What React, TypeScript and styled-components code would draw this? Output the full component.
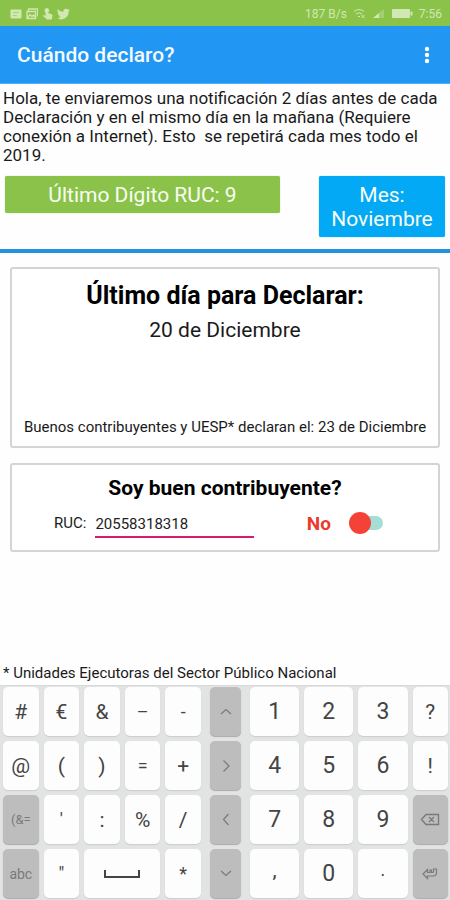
import React, { useState } from "react";
import styled, { createGlobalStyle } from "styled-components";

const GlobalStyle = createGlobalStyle`
  *, *::before, *::after { box-sizing: border-box; }
  body { margin: 0; background: #fefefe; color: #1a1a1a; font-family: Roboto, "Liberation Sans", sans-serif; }
  button, input { font-family: inherit; }
  h1, h2, p { margin: 0; }
`;

const Screen = styled.div`
  display: flex;
  flex-direction: column;
  min-height: 100vh;
`;

const StatusBar = styled.div`
  display: flex;
  justify-content: space-between;
  align-items: center;
  height: 26px;
  padding: 1px 8px 0 10px;
  background: #8bc34a;
  color: #d2e8b2;
  font-size: 12px;
`;

const StatusGroup = styled.div<{ $gap: number }>`
  display: flex;
  align-items: center;
  gap: ${(p) => p.$gap}px;
  svg { display: block; }
`;

const AppBar = styled.header`
  display: flex;
  justify-content: space-between;
  align-items: center;
  height: 58px;
  padding: 0 12px 0 17px;
  background: #2196f3;
  color: #f4faff;
  border-bottom: 1px solid #58aff5;
`;

const AppTitle = styled.h1`
  font-size: 21px;
  line-height: 26px;
  font-weight: 500;
`;

const MenuButton = styled.button`
  display: flex;
  padding: 4px 8px;
  border: 0;
  background: none;
  color: #fff;
`;

const Main = styled.main`
  display: flex;
  flex-direction: column;
  flex: 1;
`;

const Intro = styled.p`
  padding: 5px 3px 8px;
  font-size: 17px;
  line-height: 19px;
  white-space: pre-wrap;
`;

const Summary = styled.div`
  display: grid;
  grid-template-columns: 275fr 126fr;
  align-items: start;
  gap: 39px;
  padding: 3px 5px 12px;
  border-bottom: 4px solid #2490e0;
`;

const Tile = styled.div<{ $color: string }>`
  padding: 7px 8px 6px;
  border-radius: 2px;
  background: ${(p) => p.$color};
  box-shadow: 0 0 1px ${(p) => p.$color};
  color: #f8fdf4;
  font-size: 21px;
  line-height: 24px;
  text-align: center;
`;

const Cards = styled.div`
  display: flex;
  flex-direction: column;
  gap: 15px;
  padding: 14px 10px 0;
`;

const Card = styled.section`
  display: flex;
  flex-direction: column;
  align-items: center;
  border: 2px solid #d4d4d4;
  border-radius: 3px;
  background: #fff;
`;

const DeadlineCard = styled(Card)`
  min-height: 181px;
  padding: 12px 8px 9px;
`;

const TaxpayerCard = styled(Card)`
  gap: 5px;
  padding: 8px 40px 12px;
`;

const CardTitle = styled.h2<{ $size: number }>`
  font-size: ${(p) => p.$size}px;
  line-height: 30px;
  font-weight: 700;
  color: #000;
`;

const Deadline = styled.p`
  padding-top: 4px;
  font-size: 21px;
  line-height: 30px;
`;

const Note = styled.p`
  margin-top: auto;
  font-size: 15px;
  line-height: 20px;
`;

const FormRow = styled.div`
  display: flex;
  align-items: center;
  justify-content: space-between;
  width: 100%;
  padding: 0 15px 0 2px;
`;

const Field = styled.div`
  display: flex;
  align-items: center;
  gap: 9px;
`;

const FieldLabel = styled.label`
  font-size: 15px;
  line-height: 20px;
`;

const RucInput = styled.input`
  width: 159px;
  height: 30px;
  padding: 4px 0 0;
  border: 0;
  border-bottom: 2px solid #d81b72;
  outline: 0;
  background: none;
  color: #222;
  font-size: 15px;
`;

const SwitchLabel = styled.label`
  display: flex;
  align-items: center;
  gap: 18px;
  color: #ea3a2b;
  font-size: 19px;
  font-weight: 700;
`;

const Switch = styled.input`
  appearance: none;
  position: relative;
  width: 34px;
  height: 22px;
  margin: 0;
  &::before {
    content: "";
    position: absolute;
    inset: 4px 0 4px 6px;
    border-radius: 7px;
    background: #a4ded6;
  }
  &::after {
    content: "";
    position: absolute;
    top: 0;
    left: 0;
    width: 22px;
    height: 22px;
    border-radius: 50%;
    background: #f44336;
  }
  &:checked::after { left: 12px; background: #009688; }
`;

const Footnote = styled.p`
  margin-top: auto;
  padding: 12px 3px 2px;
  font-size: 15px;
  line-height: 20px;
`;

const Keyboard = styled.div`
  display: grid;
  grid-template-columns: 198fr 31fr 198fr;
  gap: 9px;
  padding: 1px 2px 2px 3px;
  border-top: 1px solid #d9d9d9;
  background: #e2e3e3;
`;

const KeyBlock = styled.div<{ $columns: string }>`
  display: grid;
  grid-template-columns: ${(p) => p.$columns};
  grid-auto-rows: 49px;
  gap: 5px;
`;

const Key = styled.button<{ $dark?: boolean; $size?: number; $span?: number; $raised?: boolean }>`
  display: flex;
  align-items: center;
  justify-content: center;
  min-width: 0;
  grid-column: span ${(p) => p.$span ?? 1};
  padding: ${(p) => (p.$raised ? "0 0 8px" : "0")};
  border: 0;
  border-radius: 5px;
  background: ${(p) => (p.$dark ? "#bdbdbd" : "#fdfdfd")};
  box-shadow: 0 1px 1px ${(p) => (p.$dark ? "#a9a9a9" : "#cdcdcd")};
  color: ${(p) => (p.$dark ? "#7a7a7a" : "#444")};
  font-size: ${(p) => p.$size ?? 21}px;
`;

type KeyDef = { label: string; glyph?: React.ReactNode; dark?: boolean; size?: number; span?: number; raised?: boolean };

const Stroke = ({ d, w = 16, h = 16, width = 1.2 }: { d: string; w?: number; h?: number; width?: number }) => (
  <svg width={w} height={h} viewBox={`0 0 ${w} ${h}`} fill="none" stroke="currentColor" strokeWidth={width} aria-hidden="true">
    <path d={d} />
  </svg>
);

const symbolKeys: KeyDef[] = [
  { label: "#" }, { label: "€" }, { label: "&" }, { label: "–", size: 18 }, { label: "-", size: 18 },
  { label: "@" }, { label: "(" }, { label: ")" }, { label: "=", size: 18 }, { label: "+" },
  { label: "(&=", dark: true, size: 13 }, { label: "'", size: 18 }, { label: ":" }, { label: "%" }, { label: "/" },
  { label: "abc", dark: true, size: 14 }, { label: "\"", size: 18 },
  { label: "Espacio", span: 2, glyph: <Stroke w={36} h={12} width={2} d="M1 2v7h34V2" /> },
  { label: "*", size: 18 },
];

const navKeys: KeyDef[] = [
  { label: "Arriba", dark: true, glyph: <Stroke d="M3 10 8 5.500l5 4.500" /> },
  { label: "Derecha", dark: true, glyph: <Stroke d="M5.500 2.500 11 8l-5.500 5.500" /> },
  { label: "Izquierda", dark: true, glyph: <Stroke d="M10.500 2 5.500 7.500l5 5.500" /> },
  { label: "Abajo", dark: true, glyph: <Stroke d="M3 5 8 9.500l5-4.500" /> },
];

const numberKeys: KeyDef[] = [
  { label: "1", size: 23 }, { label: "2", size: 23 }, { label: "3", size: 23 }, { label: "?" },
  { label: "4", size: 23 }, { label: "5", size: 23 }, { label: "6", size: 23 }, { label: "!" },
  { label: "7", size: 23 }, { label: "8", size: 23 }, { label: "9", size: 23 },
  { label: "Borrar", dark: true, glyph: <Stroke w={20} h={14} width={1.4} d="M6 1.500h12.500v10H6L1.500 6.500zM9 4l5 5M14 4 9 9" /> },
  { label: ",", size: 21, raised: true }, { label: "0", size: 23 }, { label: ".", size: 18, raised: true },
  { label: "Intro", dark: true, glyph: <Stroke w={18} h={14} width={1.2} d="M6.500 2.500 2 7l4.500 4.500V9H12q3.500 0 3.500-3.500V2h-3v2.500q0 1-1 1h-1V3H9v2.500H6.500z" /> },
];

const Keys = ({ keys, columns }: { keys: KeyDef[]; columns: string }) => (
  <KeyBlock $columns={columns}>
    {keys.map((k) => (
      <Key
        key={k.label}
        type="button"
        aria-label={k.glyph ? k.label : undefined}
        $dark={k.dark}
        $size={k.size}
        $span={k.span}
        $raised={k.raised}
      >
        {k.glyph ?? k.label}
      </Key>
    ))}
  </KeyBlock>
);

const StatusIcons = () => (
  <StatusGroup $gap={4}>
    <svg width="12" height="10" viewBox="0 0 12 10" aria-hidden="true">
      <rect x="0.500" y="0.500" width="11" height="9" rx="1" fill="currentColor" />
      <path d="M3 3.500h6M3 6.500h4" stroke="#a9d276" />
    </svg>
    <svg width="12" height="12" viewBox="0 0 12 12" fill="none" stroke="currentColor" strokeWidth="1.300" aria-hidden="true">
      <path d="M2.500 3V1h9v7.500M1 3.500h8.500v7H1zM1.500 9.500 4 6.500l2 2 1.500-1.500 2 2.500" />
    </svg>
    <svg width="11" height="12" viewBox="0 0 11 12" fill="currentColor" aria-hidden="true">
      <path d="M3.500 1.500a1.300 1.300 0 0 1 2.600 0V5l3.500 1.200q1 .4.800 1.400L9.800 11.500H5L.8 7.800l.9-.9 1.800 1z" />
      <circle cx="4.800" cy="2.500" r="2.300" />
    </svg>
    <svg width="13" height="12" viewBox="0 0 24 22" fill="currentColor" aria-hidden="true">
      <path d="M24 3.600a10 10 0 0 1-2.800.8A5 5 0 0 0 23.300 1.700a10 10 0 0 1-3.100 1.200A4.900 4.900 0 0 0 11.800 7.400 14 14 0 0 1 1.700 2.200a4.900 4.900 0 0 0 1.500 6.600 5 5 0 0 1-2.200-.6 4.900 4.900 0 0 0 3.900 4.900 5 5 0 0 1-2.200.1 4.900 4.900 0 0 0 4.600 3.400A10 10 0 0 1 0 18.600 14 14 0 0 0 21.500 6.100 10 10 0 0 0 24 3.600z" />
    </svg>
  </StatusGroup>
);

const StatusInfo = () => (
  <StatusGroup $gap={6}>
    <span>187 B/s</span>
    <svg width="13" height="11" viewBox="0 0 13 11" fill="none" stroke="currentColor" aria-hidden="true">
      <path d="M1 3.500q5-4 10 0M3 6q3-2.500 6 0M5 8.500h2M8.500 7l3 3M11.500 7l-3 3" />
    </svg>
    <svg width="14" height="11" viewBox="0 0 14 11" fill="currentColor" aria-hidden="true">
      <path d="M1 10 7 5v5z" />
      <path d="M7 5l5-4v9H7z" opacity="0.350" />
    </svg>
    <svg width="21" height="9" viewBox="0 0 21 9" fill="currentColor" aria-hidden="true">
      <rect width="18" height="9" rx="1" />
      <rect x="18.500" y="2.500" width="2" height="4" />
    </svg>
    <span>7:56</span>
  </StatusGroup>
);

export default function App() {
  const [ruc, setRuc] = useState("20558318318");
  const [good, setGood] = useState(false);
  return (
    <>
      <GlobalStyle />
      <Screen>
        <StatusBar>
          <StatusIcons />
          <StatusInfo />
        </StatusBar>
        <AppBar>
          <AppTitle>Cuándo declaro?</AppTitle>
          <MenuButton type="button" aria-label="Más opciones">
            <svg width="6" height="20" viewBox="0 0 6 20" fill="currentColor" aria-hidden="true">
              <circle cx="3" cy="4" r="2.200" />
              <circle cx="3" cy="10" r="2.200" />
              <circle cx="3" cy="16" r="2.200" />
            </svg>
          </MenuButton>
        </AppBar>
        <Main>
          <Intro>
            {"Hola, te enviaremos una notificación 2 días antes de cada Declaración y en el mismo día en la mañana (Requiere conexión a Internet). Esto  se repetirá cada mes todo el 2019."}
          </Intro>
          <Summary>
            <Tile $color="#8bc34a">Último Dígito RUC: 9</Tile>
            <Tile $color="#03a9f4">Mes: Noviembre</Tile>
          </Summary>
          <Cards>
            <DeadlineCard>
              <CardTitle $size={25}>Último día para Declarar:</CardTitle>
              <Deadline>20 de Diciembre</Deadline>
              <Note>Buenos contribuyentes y UESP* declaran el: 23 de Diciembre</Note>
            </DeadlineCard>
            <TaxpayerCard>
              <CardTitle $size={21}>Soy buen contribuyente?</CardTitle>
              <FormRow>
                <Field>
                  <FieldLabel htmlFor="ruc">RUC:</FieldLabel>
                  <RucInput id="ruc" inputMode="numeric" value={ruc} onChange={(e) => setRuc(e.target.value)} />
                </Field>
                <SwitchLabel>
                  {good ? "Sí" : "No"}
                  <Switch type="checkbox" role="switch" checked={good} onChange={(e) => setGood(e.target.checked)} />
                </SwitchLabel>
              </FormRow>
            </TaxpayerCard>
          </Cards>
          <Footnote>* Unidades Ejecutoras del Sector Público Nacional</Footnote>
        </Main>
        <Keyboard>
          <Keys keys={symbolKeys} columns="repeat(5, 1fr)" />
          <Keys keys={navKeys} columns="1fr" />
          <Keys keys={numberKeys} columns="50fr 50fr 50fr 36fr" />
        </Keyboard>
      </Screen>
    </>
  );
}
